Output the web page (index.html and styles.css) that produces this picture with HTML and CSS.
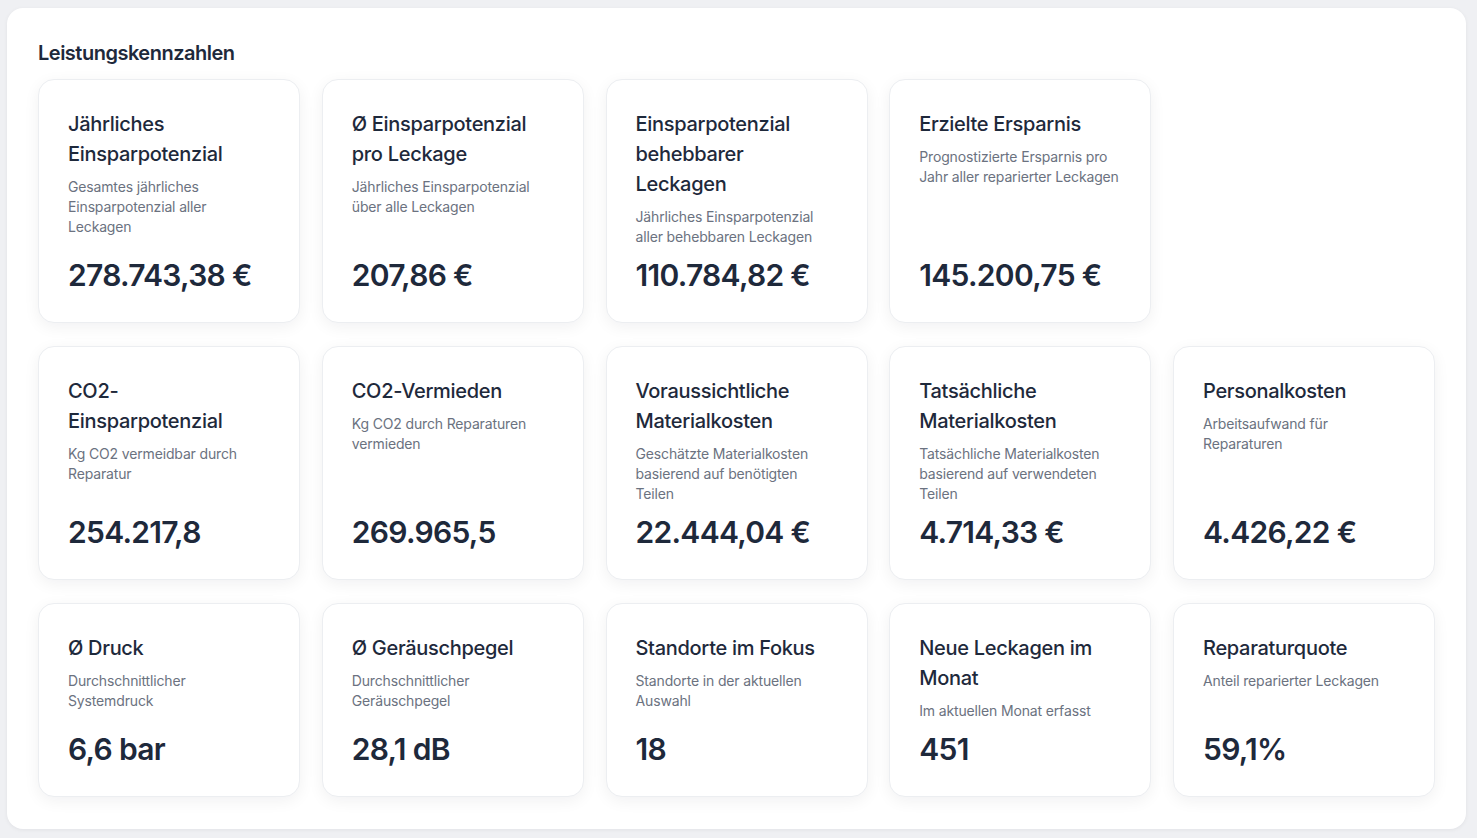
FILE: index.html
```html
<!DOCTYPE html>
<html lang="de">

<head>
  <meta charset="utf-8">
  <title>Leistungskennzahlen</title>
  <link rel="stylesheet" href="styles.css">
</head>

<body>
  <section class="panel">
    <h2 class="panel-title">Leistungskennzahlen</h2>

    <div class="kpi-grid">
      <!-- Reihe 1: Einsparpotenzial -->
      <div class="kpi-card">
        <h3 class="kpi-title">Jährliches Einsparpotenzial</h3>
        <p class="kpi-desc">Gesamtes jährliches Einsparpotenzial aller Leckagen</p>
        <div class="kpi-value">278.743,38 €</div>
      </div>
      <div class="kpi-card">
        <h3 class="kpi-title">Ø Einsparpotenzial pro Leckage</h3>
        <p class="kpi-desc">Jährliches Einsparpotenzial über alle Leckagen</p>
        <div class="kpi-value">207,86 €</div>
      </div>
      <div class="kpi-card">
        <h3 class="kpi-title">Einsparpotenzial behebbarer Leckagen</h3>
        <p class="kpi-desc">Jährliches Einsparpotenzial aller behebbaren Leckagen</p>
        <div class="kpi-value">110.784,82 €</div>
      </div>
      <div class="kpi-card">
        <h3 class="kpi-title">Erzielte Ersparnis</h3>
        <p class="kpi-desc">Prognostizierte Ersparnis pro Jahr aller reparierter Leckagen</p>
        <div class="kpi-value">145.200,75 €</div>
      </div>

      <!-- Reihe 2: CO2 und Kosten -->
      <div class="kpi-card new-row">
        <h3 class="kpi-title">CO2-Einsparpotenzial</h3>
        <p class="kpi-desc">Kg CO2 vermeidbar durch Reparatur</p>
        <div class="kpi-value">254.217,8</div>
      </div>
      <div class="kpi-card">
        <h3 class="kpi-title">CO2-Vermieden</h3>
        <p class="kpi-desc">Kg CO2 durch Reparaturen vermieden</p>
        <div class="kpi-value">269.965,5</div>
      </div>
      <div class="kpi-card">
        <h3 class="kpi-title">Voraussichtliche Materialkosten</h3>
        <p class="kpi-desc">Geschätzte Materialkosten basierend auf benötigten Teilen</p>
        <div class="kpi-value">22.444,04 €</div>
      </div>
      <div class="kpi-card">
        <h3 class="kpi-title">Tatsächliche Materialkosten</h3>
        <p class="kpi-desc">Tatsächliche Materialkosten basierend auf verwendeten Teilen</p>
        <div class="kpi-value">4.714,33 €</div>
      </div>
      <div class="kpi-card">
        <h3 class="kpi-title">Personalkosten</h3>
        <p class="kpi-desc">Arbeitsaufwand für Reparaturen</p>
        <div class="kpi-value">4.426,22 €</div>
      </div>

      <!-- Reihe 3: Betrieb -->
      <div class="kpi-card">
        <h3 class="kpi-title">Ø Druck</h3>
        <p class="kpi-desc">Durchschnittlicher Systemdruck</p>
        <div class="kpi-value">6,6 bar</div>
      </div>
      <div class="kpi-card">
        <h3 class="kpi-title">Ø Geräuschpegel</h3>
        <p class="kpi-desc">Durchschnittlicher Geräuschpegel</p>
        <div class="kpi-value">28,1 dB</div>
      </div>
      <div class="kpi-card">
        <h3 class="kpi-title">Standorte im Fokus</h3>
        <p class="kpi-desc">Standorte in der aktuellen Auswahl</p>
        <div class="kpi-value">18</div>
      </div>
      <div class="kpi-card">
        <h3 class="kpi-title">Neue Leckagen im Monat</h3>
        <p class="kpi-desc">Im aktuellen Monat erfasst</p>
        <div class="kpi-value">451</div>
      </div>
      <div class="kpi-card">
        <h3 class="kpi-title">Reparaturquote</h3>
        <p class="kpi-desc">Anteil reparierter Leckagen</p>
        <div class="kpi-value">59,1%</div>
      </div>
    </div>
  </section>
</body>

</html>
```

FILE: styles.css
```css
body {
  margin: 0;
  padding: 8px 11px 9px 7px;
  font-family: Inter, "Noto Sans", sans-serif;
  background-color: #eff0f3;
  color: #1e293b;
}

.panel {
  background-color: #ffffff;
  border-radius: 16px;
  padding: 31px 31px 32px 31px;
  box-shadow: 0 1px 4px rgba(15, 23, 42, 0.06);
}

.panel-title {
  margin: 0 0 12px 0;
  font-size: 20px;
  line-height: 28px;
  font-weight: 600;
  letter-spacing: -0.5px;
  color: #1e293b;
}

.kpi-grid {
  display: grid;
  grid-template-columns: repeat(5, 1fr);
  column-gap: 21.75px;
  row-gap: 23px;
}

.new-row {
  grid-column-start: 1;
}

.kpi-card {
  display: flex;
  flex-direction: column;
  padding: 29px;
  background-color: #ffffff;
  border: 1px solid #eceef1;
  border-radius: 16px;
  box-shadow: 0 4px 16px rgba(15, 23, 42, 0.06);
}

.kpi-title {
  margin: 0;
  font-size: 20px;
  line-height: 30px;
  font-weight: 500;
  letter-spacing: -0.3px;
  color: #1e293b;
}

.kpi-desc {
  flex: 1;
  margin: 8px 0 0 0;
  font-size: 14px;
  line-height: 20px;
  letter-spacing: -0.15px;
  color: #6b7280;
}

.kpi-value {
  margin-top: 10px;
  font-size: 30px;
  line-height: 36px;
  font-weight: 600;
  letter-spacing: -0.7px;
  color: #1e293b;
}
```
